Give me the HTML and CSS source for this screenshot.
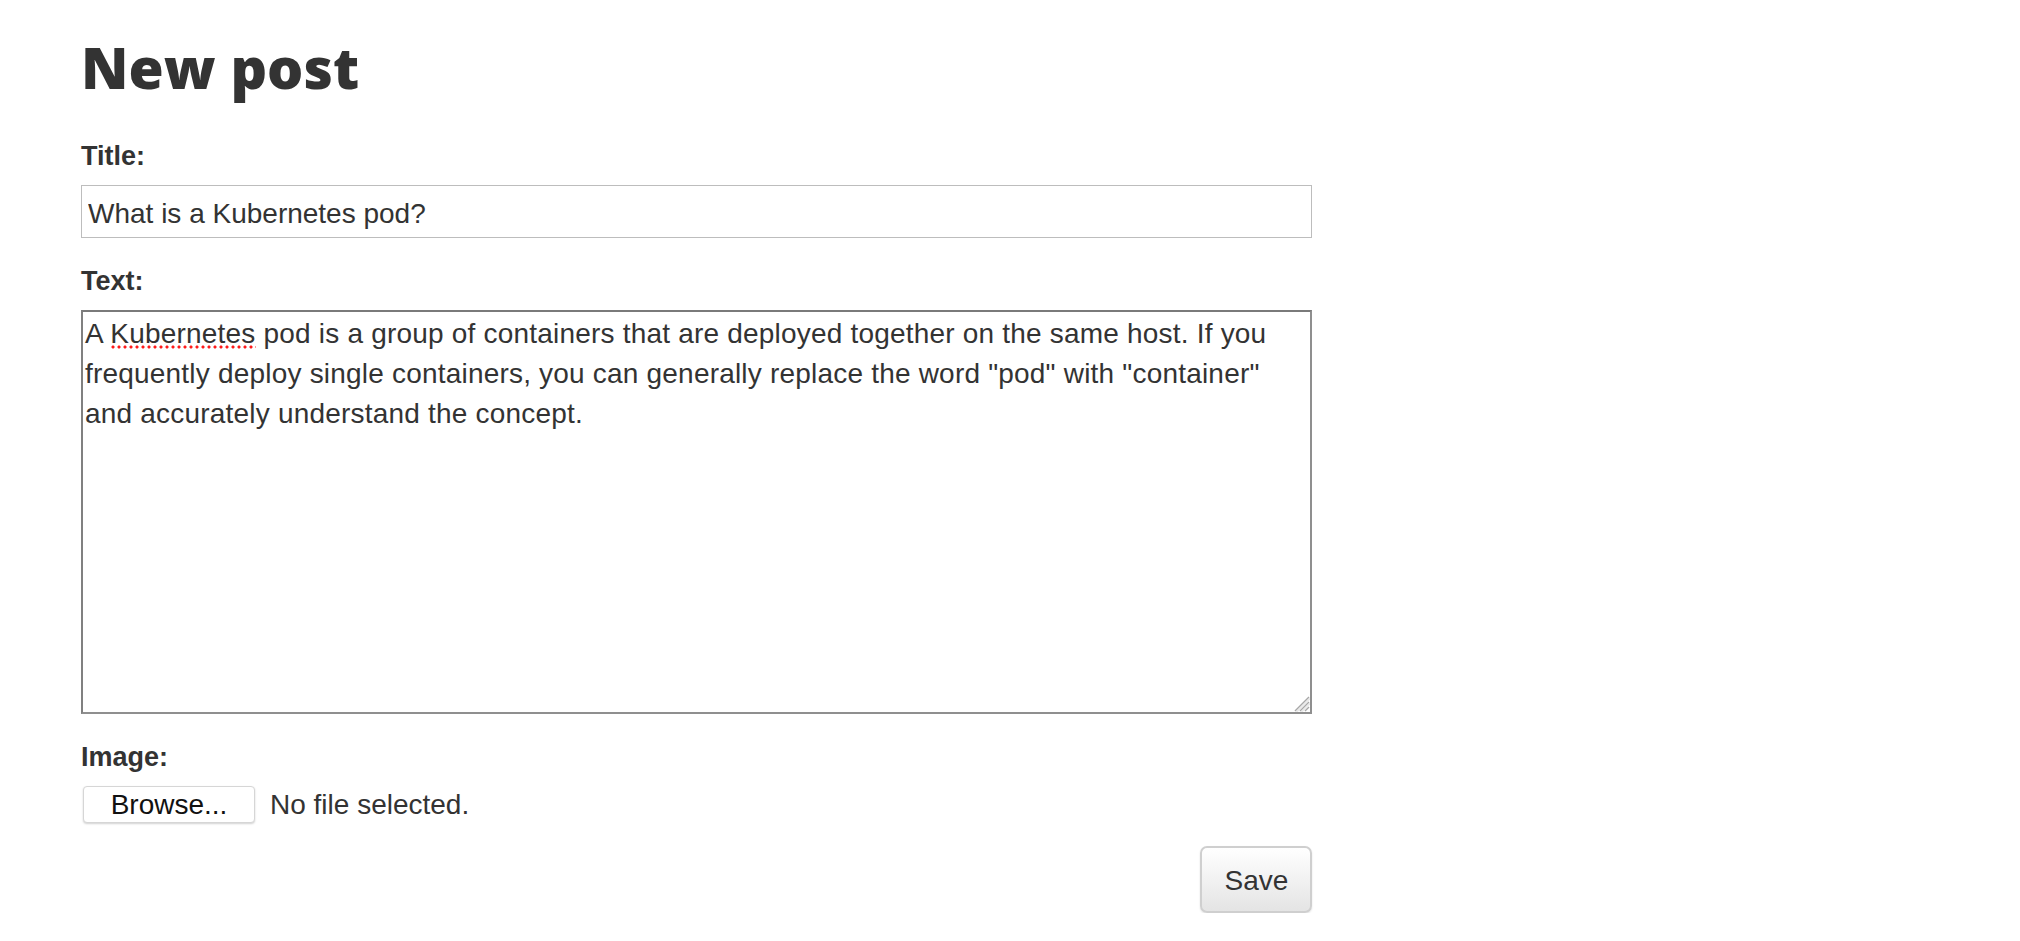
FILE: index.html
```html
<!DOCTYPE html>
<html lang="en">
<head>
<meta charset="utf-8">
<title>New post</title>
<link rel="stylesheet" href="styles.css">
</head>
<body>
<main class="page">
  <h1 class="page-title">New post</h1>
  <form class="post-form">
    <div class="field">
      <label class="field-label" for="title">Title:</label>
      <input class="text-input" id="title" type="text" value="What is a Kubernetes pod?">
    </div>
    <div class="field">
      <label class="field-label">Text:</label>
      <div class="text-area" role="textbox" aria-multiline="true">A <span class="misspelled">Kubernetes</span> pod is a group of containers that are deployed together on the same host. If you frequently deploy single containers, you can generally replace the word "pod" with "container" and accurately understand the concept.<svg class="grip" width="20" height="20" viewBox="0 0 20 20"><g stroke-width="1.5"><line x1="19" y1="5" x2="5" y2="19" stroke="#a8a8a8"/><line x1="19" y1="10" x2="10" y2="19" stroke="#a8a8a8"/><line x1="19" y1="15" x2="15" y2="19" stroke="#a8a8a8"/><line x1="20" y1="6.5" x2="6.5" y2="20" stroke="#e8e8e8"/><line x1="20" y1="11.5" x2="11.5" y2="20" stroke="#e8e8e8"/></g></svg></div>
    </div>
    <div class="field">
      <label class="field-label">Image:</label>
      <div class="file-row">
        <button type="button" class="browse-btn">Browse...</button>
        <span class="file-status">No file selected.</span>
      </div>
    </div>
    <div class="actions">
      <button type="button" class="save-btn">Save</button>
    </div>
  </form>
</main>
</body>
</html>
```
FILE: styles.css
```css
html, body {
  margin: 0;
  padding: 0;
  background: #ffffff;
}

body {
  font-family: "Liberation Sans", Arial, Helvetica, sans-serif;
  color: #333333;
}

.page {
  width: 1231px;
  padding: 33px 0 0 81px;
}

.page-title {
  margin: 0 0 35px 0;
  font-family: "Open Sans", Lato, "Liberation Sans", sans-serif;
  font-weight: 800;
  font-size: 57px;
  line-height: 68px;
  letter-spacing: 0;
  color: #333333;
}

.post-form {
  display: flex;
  flex-direction: column;
}

.field {
  display: flex;
  flex-direction: column;
  margin-bottom: 23px;
}

.field-label {
  display: block;
  font-size: 27px;
  font-weight: bold;
  line-height: 40px;
  margin-bottom: 9px;
  color: #333333;
}

.text-input {
  box-sizing: border-box;
  width: 100%;
  height: 53px;
  margin: 0;
  padding: 4px 6px 0 6px;
  border: 1px solid #bdbdbd;
  border-radius: 0;
  font-family: "Liberation Sans", Arial, sans-serif;
  font-size: 28px;
  color: #333333;
  outline: none;
}

.text-area {
  position: relative;
  box-sizing: border-box;
  width: 100%;
  height: 404px;
  padding: 2px;
  border: 2px solid #8f8f8f;
  border-top-color: #7a7a7a;
  border-left-color: #808080;
  font-size: 28px;
  line-height: 40px;
  letter-spacing: 0.2px;
  color: #333333;
  white-space: normal;
}

.misspelled {
  background-image: radial-gradient(circle at 3px 2px, #ff1a1a 1.3px, rgba(255, 0, 0, 0) 1.8px);
  background-size: 6px 4px;
  background-repeat: repeat-x;
  background-position: 0 100%;
}

.grip {
  position: absolute;
  right: 0;
  bottom: 0;
}

.file-row {
  display: flex;
  align-items: center;
  gap: 15px;
  padding-left: 2px;
}

.browse-btn {
  box-sizing: border-box;
  width: 172px;
  height: 37px;
  margin: 0;
  padding: 0;
  background: #ffffff;
  border: 1px solid #d6d6d6;
  border-radius: 4px;
  box-shadow: 0 1px 2px rgba(0, 0, 0, 0.18);
  font-family: "Liberation Sans", Arial, sans-serif;
  font-size: 28px;
  line-height: 35px;
  color: #111111;
}

.file-status {
  font-size: 28px;
  line-height: 37px;
  color: #333333;
}

.actions {
  display: flex;
  justify-content: flex-end;
  margin-top: 0;
}

.save-btn {
  box-sizing: border-box;
  width: 112px;
  height: 67px;
  margin: 0;
  padding: 0 0 0 1px;
  background: linear-gradient(#ffffff, #e4e4e4);
  border: 2px solid #cfcfcf;
  border-radius: 7px;
  box-shadow: 0 1px 2px rgba(0, 0, 0, 0.12);
  font-family: "Liberation Sans", Arial, sans-serif;
  font-size: 28px;
  line-height: 65px;
  color: #333333;
}
```
